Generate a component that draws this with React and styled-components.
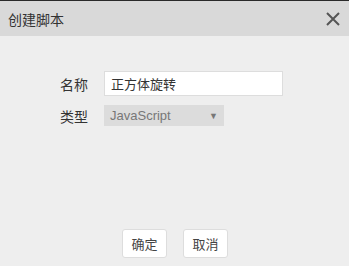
import React from 'react';
import styled, { createGlobalStyle } from 'styled-components';

const Global = createGlobalStyle`
  html, body { margin: 0; padding: 0; height: 100%; background: #eeeeee; }
  #root { height: 100%; }
  * { box-sizing: border-box; }
`;

const Dialog = styled.div`
  height: 266px;
  width: 349px;
  display: flex;
  flex-direction: column;
  background: #eeeeee;
  border-top: 1px solid #2a2a2a;
  font-family: "Liberation Sans", "Noto Sans CJK SC", sans-serif;
  color: #333;
`;

const Header = styled.div`
  height: 35px;
  display: flex;
  align-items: center;
  justify-content: space-between;
  padding: 0 8px 0 8px;
  background: #d9d9d9;
`;

const Title = styled.span`
  font-size: 14px;
  color: #333;
`;

const Close = styled.button`
  border: 0;
  background: none;
  padding: 0;
  width: 16px;
  height: 16px;
  display: flex;
  cursor: pointer;
`;

const Form = styled.div`
  flex: 1;
  display: flex;
  flex-direction: column;
  gap: 9px;
  padding: 35px 0 0 60px;
`;

const Row = styled.div`
  display: flex;
  align-items: center;
`;

const Label = styled.span`
  width: 44px;
  font-size: 14px;
  color: #333;
`;

const Input = styled.div`
  width: 179px;
  height: 25px;
  background: #fff;
  border: 1px solid #dddddd;
  padding: 0 6px;
  display: flex;
  align-items: center;
  font-size: 13px;
  color: #333;
`;

const Select = styled.div`
  width: 120px;
  height: 21px;
  background: #dcdcdc;
  padding: 0 6px;
  display: flex;
  align-items: center;
  justify-content: space-between;
  font-size: 13px;
  color: #777;
`;

const Arrow = styled.span`
  font-size: 9px;
  color: #777;
  margin-right: 0;
`;

const Footer = styled.div`
  display: flex;
  justify-content: center;
  gap: 16px;
  padding-bottom: 8px;
  padding-left: 1px;
`;

const Btn = styled.button`
  width: 45px;
  height: 29px;
  background: #fff;
  border: 1px solid #dddddd;
  border-radius: 3px;
  font-family: "Noto Sans CJK SC", sans-serif;
  font-size: 13px;
  color: #444;
  padding: 0;
`;

export default function App() {
  return (
    <>
      <Global />
      <Dialog>
        <Header>
          <Title>创建脚本</Title>
          <Close>
            <svg width="16" height="16" viewBox="0 0 16 16">
              <path d="M2 2 L14 14 M14 2 L2 14" stroke="#555" strokeWidth="2" />
            </svg>
          </Close>
        </Header>
        <Form>
          <Row>
            <Label>名称</Label>
            <Input>正方体旋转</Input>
          </Row>
          <Row>
            <Label>类型</Label>
            <Select>
              JavaScript
              <Arrow>▼</Arrow>
            </Select>
          </Row>
        </Form>
        <Footer>
          <Btn>确定</Btn>
          <Btn>取消</Btn>
        </Footer>
      </Dialog>
    </>
  );
}
